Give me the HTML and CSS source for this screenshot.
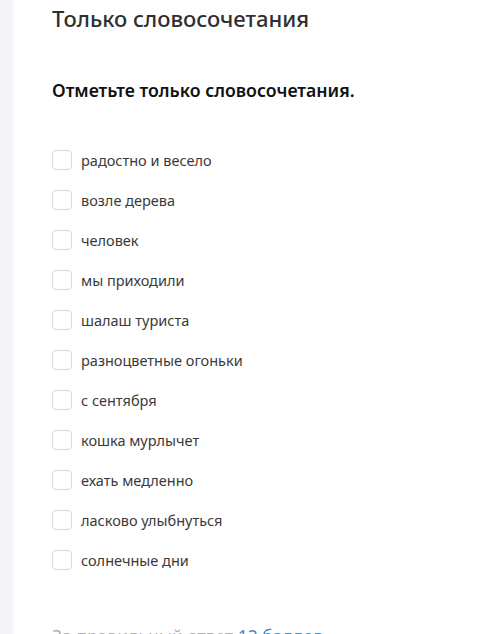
FILE: index.html
```html
<!DOCTYPE html>
<html lang="ru">
<head>
<meta charset="utf-8">
<link rel="stylesheet" href="styles.css">
</head>
<body>
<div class="page">
  <aside class="strip"></aside>
  <main class="content">
    <h1 class="title">Только словосочетания</h1>
    <p class="question">Отметьте только словосочетания.</p>
    <ul class="options">
      <li class="option"><span class="box"></span><span class="label">радостно и весело</span></li>
      <li class="option"><span class="box"></span><span class="label">возле дерева</span></li>
      <li class="option"><span class="box"></span><span class="label">человек</span></li>
      <li class="option"><span class="box"></span><span class="label">мы приходили</span></li>
      <li class="option"><span class="box"></span><span class="label">шалаш туриста</span></li>
      <li class="option"><span class="box"></span><span class="label">разноцветные огоньки</span></li>
      <li class="option"><span class="box"></span><span class="label">с сентября</span></li>
      <li class="option"><span class="box"></span><span class="label">кошка мурлычет</span></li>
      <li class="option"><span class="box"></span><span class="label">ехать медленно</span></li>
      <li class="option"><span class="box"></span><span class="label">ласково улыбнуться</span></li>
      <li class="option"><span class="box"></span><span class="label">солнечные дни</span></li>
    </ul>
    <p class="score">За правильный ответ <span class="points">12 баллов</span></p>
  </main>
</div>
</body>
</html>
```
FILE: styles.css
```css
html, body {
  margin: 0;
  padding: 0;
  background: #ffffff;
  overflow: hidden;
}
body {
  font-family: "Noto Sans", "Open Sans", sans-serif;
  color: #333333;
}
.page {
  display: flex;
  min-height: 634px;
}
.strip {
  width: 13px;
  flex: none;
  background: #f4f5f8;
}
.content {
  flex: 1;
  padding-left: 39px;
}
.title {
  margin: 0;
  padding-top: 2px;
  font-size: 22px;
  line-height: 32px;
  font-weight: 500;
  color: #2f2f2f;
}
.question {
  margin: 44px 0 0;
  font-size: 17.7px;
  line-height: 24px;
  font-weight: 600;
  color: #111111;
}
.options {
  list-style: none;
  margin: 48px 0 0;
  padding: 0;
  display: flex;
  flex-direction: column;
  gap: 20px;
}
.option {
  display: flex;
  align-items: center;
  height: 20px;
}
.box {
  box-sizing: border-box;
  width: 20px;
  height: 20px;
  border: 1px solid #d9d9d9;
  border-radius: 4px;
  background: #fff;
  flex: none;
}
.label {
  margin-left: 9px;
  font-size: 14.5px;
  color: #3a3a3a;
}
.score {
  margin: 55px 0 0;
  font-size: 17.5px;
  line-height: 22px;
  color: #b0b0b0;
}
.points {
  color: #3c8ec8;
}
```
